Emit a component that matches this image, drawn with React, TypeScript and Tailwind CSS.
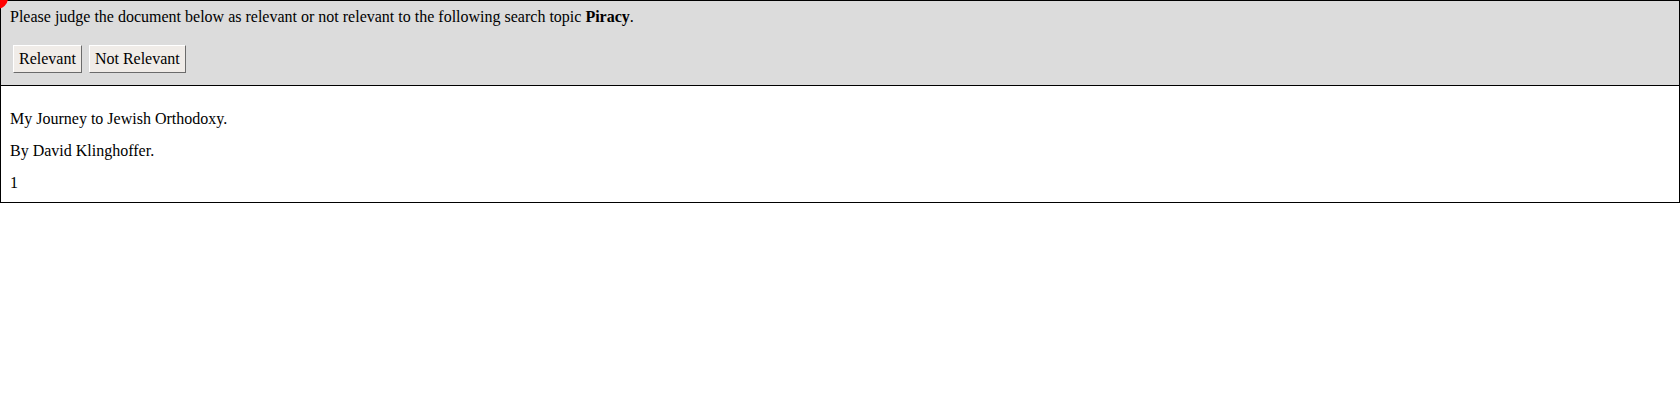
export default function App() {
    return (
        <div className="relative w-[1680px] h-[400px] bg-white text-black text-[16px] font-['Liberation_Serif',serif]">
            <div className="border border-black bg-[#dcdcdc] px-[9px] pt-[7px] pb-[12px]">
                <p className="leading-[18px]">
                    Please judge the document below as relevant or not relevant to the following search topic <b>Piracy</b>.
                </p>
                <div className="mt-[19px] ml-[3px] flex gap-[7px]">
                    <button className="h-[28px] px-[5px] bg-[#f0ece8] border border-t-white border-l-white border-b-[#6b6b6b] border-r-[#6b6b6b] leading-[18px]">
                        Relevant
                    </button>
                    <button className="h-[28px] px-[5px] bg-[#f0ece8] border border-t-white border-l-white border-b-[#6b6b6b] border-r-[#6b6b6b] leading-[18px]">
                        Not Relevant
                    </button>
                </div>
            </div>

            <div className="border border-t-0 border-black px-[9px] pt-[24px] pb-[10px]">
                <p className="leading-[18px]">My Journey to Jewish Orthodoxy.</p>
                <p className="leading-[18px] mt-[14px]">By David Klinghoffer.</p>
                <p className="leading-[18px] mt-[14px]">1</p>
            </div>

            {/* red marker in the corner */}
            <div className="absolute left-[-14px] top-[-13px] w-[22px] h-[22px] rounded-full bg-[#ff0000]"></div>
        </div>
    );
}
